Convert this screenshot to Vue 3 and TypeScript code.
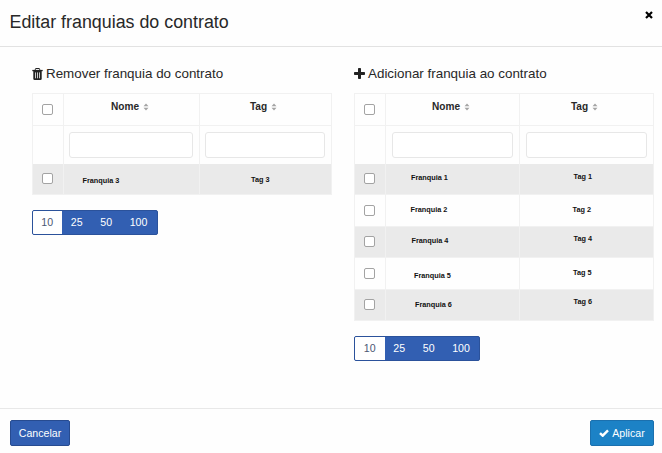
<script setup lang="ts">
interface Row {
  name: string
  tag: string
  nameX: number
  nameY: number
  tagX: number
  tagY: number
}
interface Panel {
  kind: 'remove' | 'add'
  title: string
  rows: Row[]
}

const pageSizes: number[] = [10, 25, 50, 100]

const panels: Panel[] = [
  {
    kind: 'remove',
    title: 'Remover franquia do contrato',
    rows: [{ name: 'Franquia 3', tag: 'Tag 3', nameX: 18.5, nameY: 2, tagX: 51, tagY: 1 }],
  },
  {
    kind: 'add',
    title: 'Adicionar franquia ao contrato',
    rows: [
      { name: 'Franquia 1', tag: 'Tag 1', nameX: 25, nameY: -1, tagX: 53.5, tagY: -2 },
      { name: 'Franquia 2', tag: 'Tag 2', nameX: 24.5, nameY: 0, tagX: 52.5, tagY: 0 },
      { name: 'Franquia 4', tag: 'Tag 4', nameX: 25.5, nameY: -1, tagX: 53.5, tagY: -2.5 },
      { name: 'Franquia 5', tag: 'Tag 5', nameX: 28, nameY: 2.5, tagX: 53, tagY: -0.5 },
      { name: 'Franquia 6', tag: 'Tag 6', nameX: 29, nameY: 0, tagX: 53.5, tagY: -2.5 },
    ],
  },
]

const shift = (x: number, y: number) => ({ paddingLeft: `${x}px`, paddingTop: `${10 + y}px` })
</script>

<template>
  <div class="modal">
    <header class="modal-header">
      <h1>Editar franquias do contrato</h1>
      <button class="close" aria-label="Fechar">
        <svg width="8" height="8" viewBox="0 0 8 8"><path d="M1 1 7 7M7 1 1 7" stroke="#000" stroke-width="2.2" /></svg>
      </button>
    </header>

    <main class="modal-body">
      <section v-for="p in panels" :key="p.kind" class="panel" :class="p.kind">
        <h2>
          <svg v-if="p.kind === 'remove'" class="icon" width="11" height="12" viewBox="0 0 11 12">
            <path d="M3.3 2V1.2Q3.3.5 4 .5H7Q7.7.5 7.7 1.2V2" fill="none" stroke="#222" />
            <path d="M.3 1.9H10.7V3.2H.3Z" fill="#222" />
            <path d="M1.3 3H9.7V10.7Q9.7 12 8.5 12H2.5Q1.3 12 1.3 10.7Z" fill="#222" />
            <path d="M3.5 4.4V10.3M5.5 4.4V10.3M7.5 4.4V10.3" stroke="#ddd" stroke-width=".9" />
          </svg>
          <svg v-else class="icon" width="11" height="11" viewBox="0 0 11 11">
            <path d="M4.8 0H6.2Q7 0 7 .8V4H10.2Q11 4 11 4.8V6.2Q11 7 10.2 7H7V10.2Q7 11 6.2 11H4.8Q4 11 4 10.2V7H.8Q0 7 0 6.2V4.8Q0 4 .8 4H4V.8Q4 0 4.8 0Z" fill="#222" />
          </svg>
          <span>{{ p.title }}</span>
        </h2>

        <div class="table">
          <div class="row head">
            <div class="cell pick"><i class="box" /></div>
            <div v-for="c in ['Nome', 'Tag']" :key="c" class="cell title">
              <span>{{ c }}</span>
              <svg width="6" height="8" viewBox="0 0 6 8"><path d="M.5 3.2 3 .5 5.5 3.2ZM.5 4.8 3 7.5 5.5 4.8Z" fill="#a5a5a5" /></svg>
            </div>
          </div>
          <div class="row filter">
            <div class="cell" />
            <div class="cell"><input type="text" aria-label="Nome" /></div>
            <div class="cell"><input type="text" aria-label="Tag" /></div>
          </div>
          <div v-for="r in p.rows" :key="r.name" class="row data">
            <div class="cell pick"><i class="box" /></div>
            <div class="cell" :style="shift(r.nameX, r.nameY)">{{ r.name }}</div>
            <div class="cell" :style="shift(r.tagX, r.tagY)">{{ r.tag }}</div>
          </div>
        </div>

        <div class="sizes">
          <button v-for="n in pageSizes" :key="n" :class="{ active: n === 10, wide: n === 100 }">{{ n }}</button>
        </div>
      </section>
    </main>

    <footer class="modal-footer">
      <button class="btn cancel">Cancelar</button>
      <button class="btn apply">
        <svg width="10" height="8" viewBox="0 0 10 8"><path d="M1 4.1 3.7 6.7 9 1.3" fill="none" stroke="#fff" stroke-width="2.4" /></svg>
        <span>Aplicar</span>
      </button>
    </footer>
  </div>
</template>

<style>
body {
  margin: 0;
  background: #fff;
}
</style>

<style scoped>
* {
  box-sizing: border-box;
}
.modal {
  display: flex;
  flex-direction: column;
  width: 662px;
  height: 453px;
  overflow: hidden;
  background: #fefefe;
  color: #282828;
  font-family: "Liberation Sans", Arial, sans-serif;
}
button {
  margin: 0;
  padding: 0;
  border: 0;
  background: none;
  font-family: inherit;
}
.modal-header {
  display: flex;
  justify-content: space-between;
  height: 47px;
  padding: 11px 9px 0 9.5px;
  border-bottom: 1px solid #e2e2e2;
}
h1 {
  margin: 0;
  font-size: 17.85px;
  line-height: 22px;
  font-weight: 400;
  white-space: nowrap;
}
.close {
  display: flex;
  width: 8px;
  height: 8px;
}
.modal-body {
  display: flex;
  gap: 22px;
  flex: 1;
  padding: 18px 0 0 32px;
}
.panel {
  width: 300px;
}
h2 {
  display: flex;
  align-items: center;
  gap: 3px;
  height: 17px;
  margin: 0 0 11px;
  font-size: 13.4px;
  font-weight: 400;
  white-space: nowrap;
}
.icon {
  flex: none;
}
.table {
  border: solid #f1f1f1;
  border-width: 1px 1px 0 0;
}
.row {
  display: grid;
  grid-template-columns: 31px 136px 1fr;
  height: 31.5px;
}
.add .row {
  grid-template-columns: 31px 134px 1fr;
}
.cell {
  border-left: 1px solid #f1f1f1;
}
.head .cell,
.data .cell {
  border-bottom: 1px solid #f1f1f1;
}
.pick {
  display: flex;
  align-items: center;
  justify-content: center;
}
.box {
  width: 11px;
  height: 11px;
  margin-right: 1px;
  border: 1px solid #a3a3a3;
  border-radius: 2px;
  background: #fff;
}
.title {
  display: flex;
  justify-content: center;
  align-items: center;
  gap: 4px;
  padding: 0 3px 5px 0;
  font-size: 10.1px;
  font-weight: 700;
}
.title:last-child {
  padding-right: 4px;
}
.filter {
  height: 38px;
}
.filter .cell {
  padding: 6px 6px 0 5px;
}
.add .filter .cell {
  padding-left: 6px;
}
input {
  display: block;
  width: 100%;
  height: 26px;
  border: 1px solid #e7e7e7;
  border-radius: 3px;
  background: #fff;
}
.data {
  font-size: 7.3px;
  line-height: 10px;
  font-weight: 700;
  color: #111;
}
.data:nth-child(odd) {
  background: #eaeaea;
}
.sizes {
  display: flex;
  width: 126px;
  height: 25px;
  margin-top: 15px;
  border: 1px solid #2b529b;
  border-radius: 2px;
  background: #325fb2;
}
.remove .sizes {
  margin-left: -0.5px;
}
.sizes button {
  width: 29.5px;
  padding-bottom: 1px;
  color: #fff;
  font-size: 10.6px;
}
.sizes .active {
  width: 29.5px;
  background: #fff;
  color: #4b5874;
  border-radius: 1px 0 0 1px;
}
.sizes .wide {
  width: 35px;
}
.modal-footer {
  display: flex;
  justify-content: space-between;
  height: 45px;
  padding: 11px 8px 0 10px;
  border-top: 1px solid #e8e8e8;
}
.btn {
  display: flex;
  align-items: center;
  justify-content: center;
  gap: 3px;
  height: 26px;
  border-radius: 2px;
  color: #fff;
  font-size: 10.6px;
}
.cancel {
  width: 60px;
  border: 1px solid #274b90;
  background: #325fb2;
}
.apply {
  width: 64px;
  border: 1px solid #1b70ae;
  background: #1c82c6;
}
</style>
